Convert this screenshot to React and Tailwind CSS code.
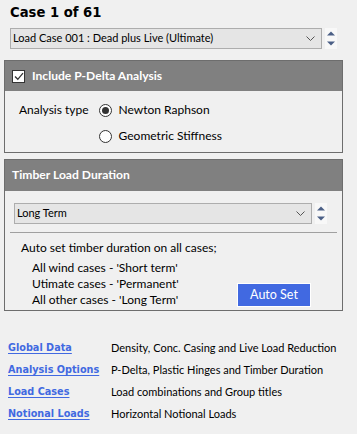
import { useState } from 'react'

const ui = { fontFamily: 'Lato, "Noto Sans", sans-serif' }
const bold = { fontFamily: '"DejaVu Sans", Verdana, sans-serif' }

function Spin() {
    return (
        <div className="flex flex-col items-center justify-center w-[12px] h-[21px] bg-[#f8f8f8] gap-[5px]">
            <svg width="8" height="5" viewBox="0 0 8 5"><path d="M0 4.5 L4 0.5 L8 4.5 Z" fill="#4b5f86" /></svg>
            <svg width="8" height="5" viewBox="0 0 8 5"><path d="M0 0.5 L4 4.5 L8 0.5 Z" fill="#4b5f86" /></svg>
        </div>
    )
}

function Select({ value, width }) {
    return (
        <div className="flex items-center gap-[3px]">
            <div className={`flex items-center justify-between h-[21px] border border-[#adadad] bg-[#e5e5e5] pl-[2px] pr-[6px] text-[11px] text-black ${width}`}>
                <span>{value}</span>
                <svg width="9" height="6" viewBox="0 0 9 6"><path d="M0.5 0.5 L4.5 4.5 L8.5 0.5" stroke="#555" fill="none" strokeWidth="1" /></svg>
            </div>
            <Spin />
        </div>
    )
}

function Radio({ checked, label, onClick }) {
    return (
        <div className="flex items-center gap-[7px] cursor-pointer" onClick={onClick}>
            <div className="w-[13px] h-[13px] rounded-full border border-[#333] bg-white flex items-center justify-center">
                {checked && <div className="w-[7px] h-[7px] rounded-full bg-[#333]" />}
            </div>
            <span>{label}</span>
        </div>
    )
}

export default function App() {
    const [pdelta, setPdelta] = useState(true)
    const [type, setType] = useState('newton')

    const links = [
        ['Global Data', 'Density, Conc. Casing and Live Load Reduction'],
        ['Analysis Options', 'P-Delta, Plastic Hinges and Timber Duration'],
        ['Load Cases', 'Load combinations and Group titles'],
        ['Notional Loads', 'Horizontal Notional Loads'],
    ]

    return (
        <div className="w-[357px] h-[434px] bg-[#f0f0f0] text-[12px] text-black overflow-hidden" style={ui}>
            <div className="pl-[10px] pt-[4px] text-[13.2px] font-bold leading-[18px]" style={bold}>Case 1 of 61</div>

            <div className="pl-[10px] mt-[6px]">
                <Select value="Load Case 001 : Dead plus Live (Ultimate)" width="w-[312px]" />
            </div>

            <div className="ml-[4px] mt-[11px] w-[339px] border border-[#6d6d6d]">
                <div className="h-[30px] bg-[#808080] flex items-center pl-[7px] gap-[7px]">
                    <div
                        className="w-[13px] h-[13px] bg-white border border-[#333] flex items-center justify-center cursor-pointer"
                        onClick={() => setPdelta(!pdelta)}
                    >
                        {pdelta && (
                            <svg width="10" height="9" viewBox="0 0 10 9"><path d="M1 4.5 L3.8 7.3 L9 1.2" stroke="#333" strokeWidth="1.3" fill="none" /></svg>
                        )}
                    </div>
                    <span className="text-white font-bold text-[12.1px]">Include P-Delta Analysis</span>
                </div>
                <div className="pl-[14px] pt-[10px] pb-[7px] flex gap-[10px]">
                    <span className="leading-[18px]">Analysis type</span>
                    <div className="flex flex-col gap-[8px] leading-[18px]">
                        <Radio checked={type === 'newton'} label="Newton Raphson" onClick={() => setType('newton')} />
                        <Radio checked={type === 'geometric'} label="Geometric Stiffness" onClick={() => setType('geometric')} />
                    </div>
                </div>
            </div>

            <div className="ml-[4px] mt-[6px] w-[339px] border border-[#6d6d6d]">
                <div className="h-[31px] bg-[#808080] flex items-center pl-[7px]">
                    <span className="text-white font-bold text-[12.1px]">Timber Load Duration</span>
                </div>
                <div className="pl-[9px] pt-[12px]">
                    <Select value="Long Term" width="w-[298px]" />
                </div>
                <div className="mx-[5px] mt-[8px] border-t border-[#a0a0a0]" />
                <div className="pl-[16px] pr-[31px] pt-[7px] pb-[2px] leading-[16px]">
                    <div>Auto set timber duration on all cases;</div>
                    <div className="flex justify-between items-end mt-[4px]">
                        <div className="pl-[11px] flex flex-col">
                            <span>All wind cases - 'Short term'</span>
                            <span>Utimate cases - 'Permanent'</span>
                            <span>All other cases - 'Long Term'</span>
                        </div>
                        <button className="w-[74px] h-[24px] bg-[#4169e1] border border-white text-white text-[12.5px] mb-[1px]">
                            Auto Set
                        </button>
                    </div>
                </div>
            </div>

            <div className="pl-[8px] mt-[29px] flex flex-col gap-[6px]">
                {links.map(([name, desc]) => (
                    <div key={name} className="flex items-center h-[16px] whitespace-nowrap">
                        <a href="#" className="w-[103px] text-[#4169e1] underline underline-offset-2 font-bold text-[9.7px]" style={bold}>{name}</a>
                        <span className="text-[11px]">{desc}</span>
                    </div>
                ))}
            </div>
        </div>
    )
}
